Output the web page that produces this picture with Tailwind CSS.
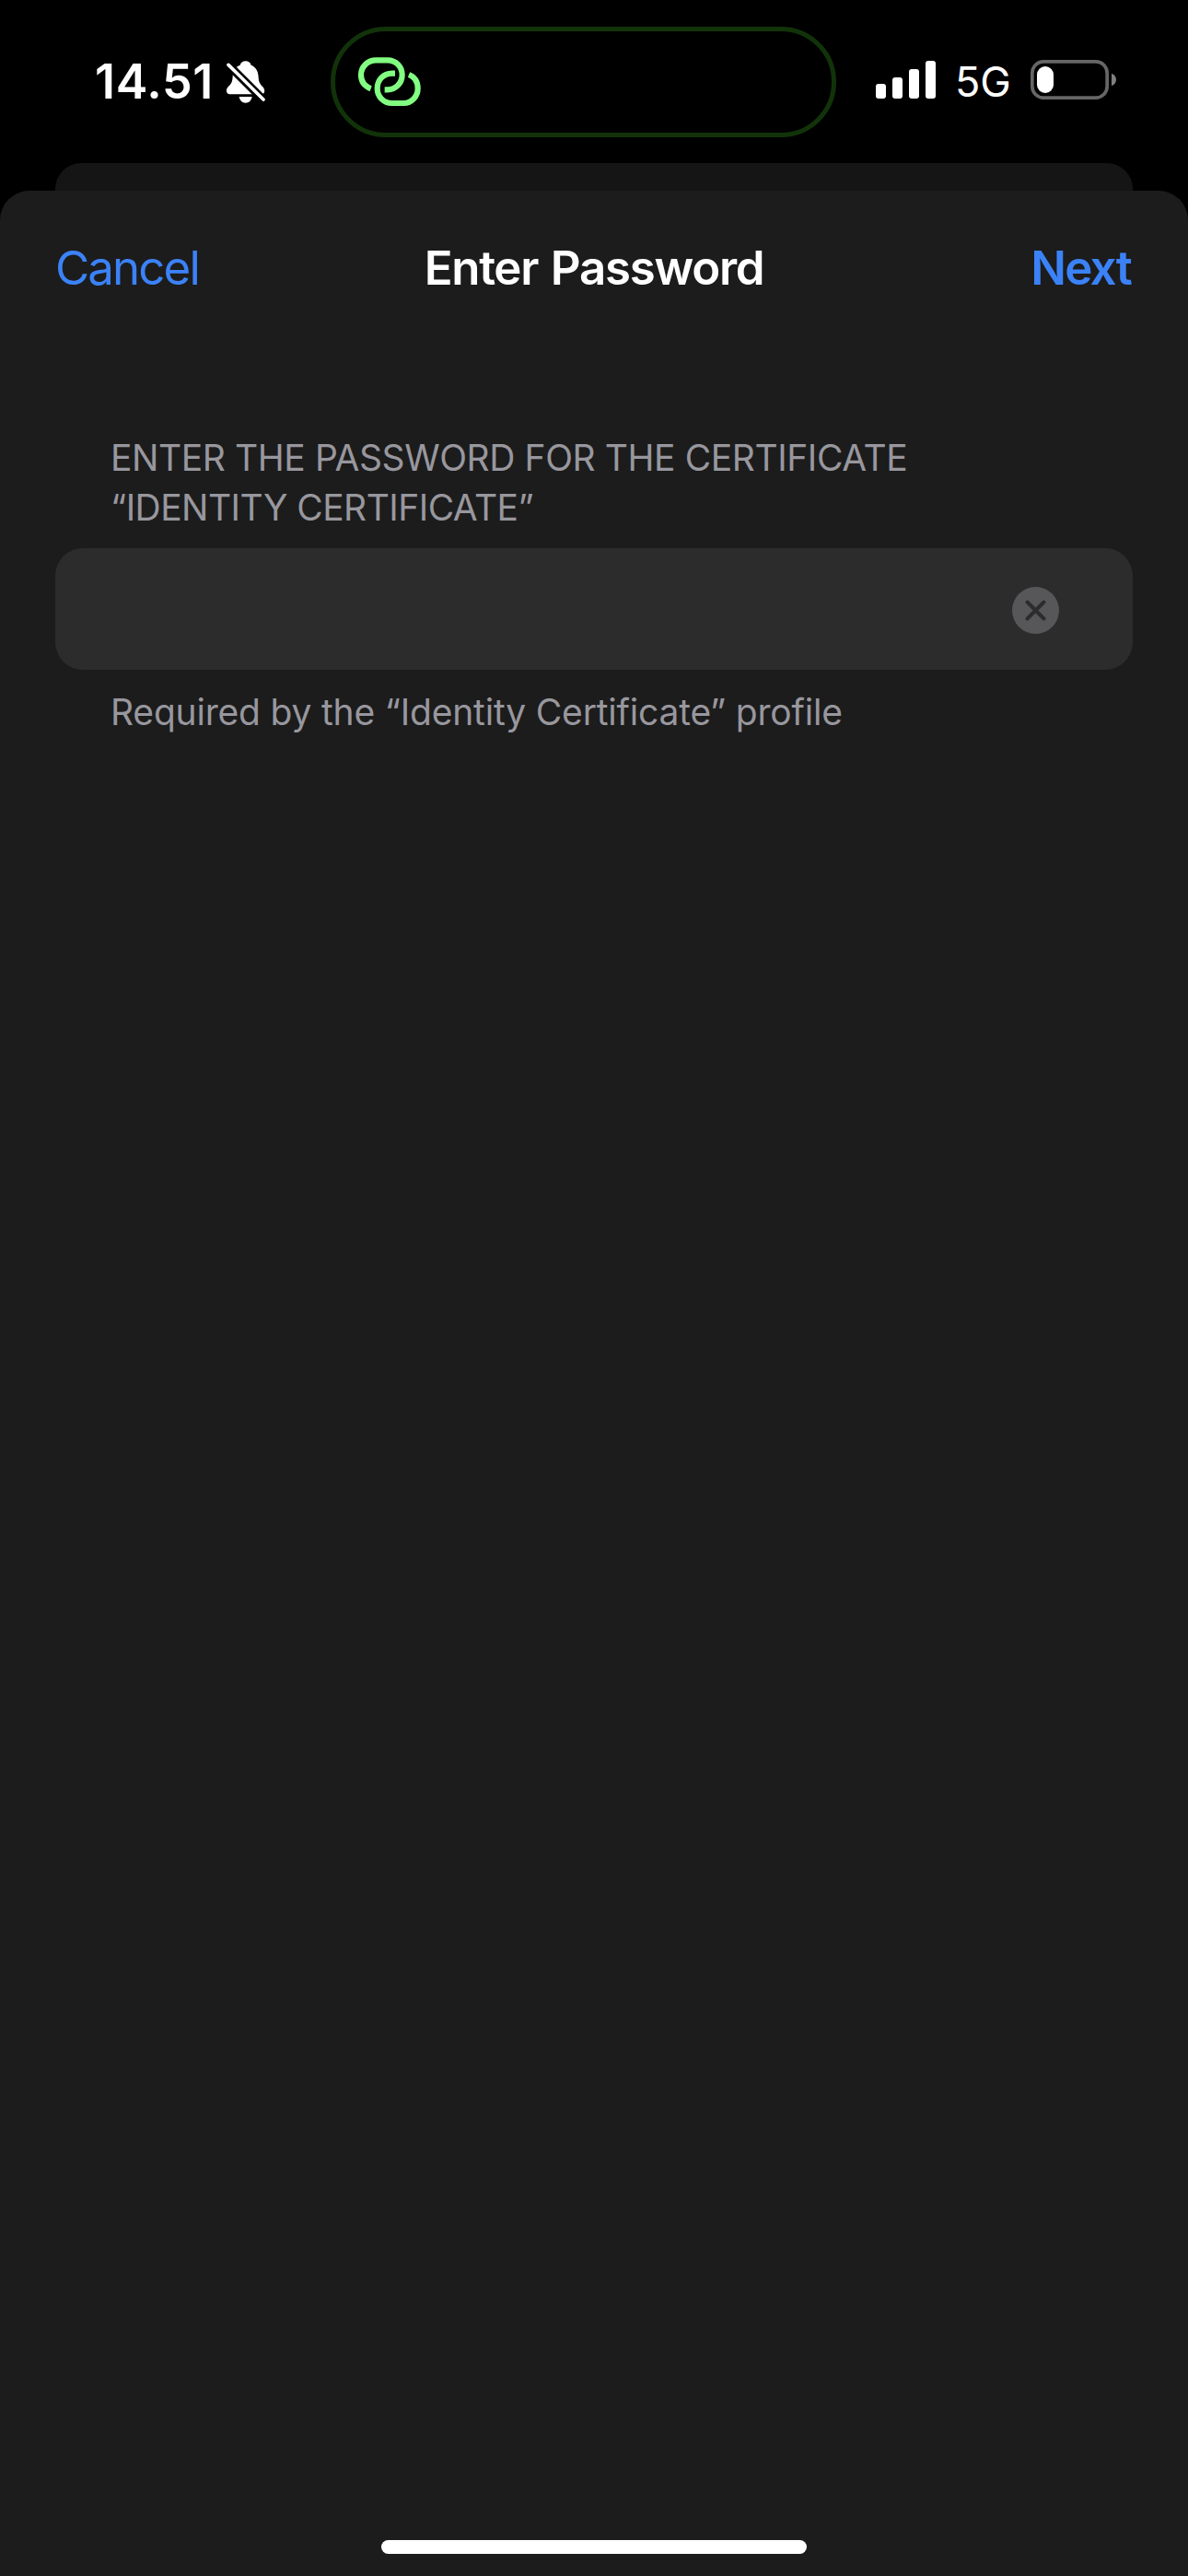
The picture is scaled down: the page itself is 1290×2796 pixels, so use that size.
<!DOCTYPE html>
<html lang="en">
<head>
<meta charset="utf-8">
<title>Enter Password</title>
<script src="https://cdn.jsdelivr.net/npm/@tailwindcss/browser@4"></script>
</head>
<body class="bg-black font-['Inter',sans-serif] text-white">
<div class="flex h-[2796px] w-[1290px] flex-col overflow-hidden">

  <!-- Status bar -->
  <header class="flex h-[177px] shrink-0 items-center">
    <div class="flex h-full w-[359px] items-center pl-[103px]">
      <span class="w-[141px] whitespace-nowrap text-[52px] leading-[60px] font-semibold tracking-[0.66px]">14.51</span>
      <svg class="h-[50px] w-[45px] shrink-0" viewBox="27 24 135 150" fill="#fff">
        <mask id="slash" maskUnits="userSpaceOnUse" x="20" y="20" width="150" height="160">
          <rect x="20" y="20" width="150" height="160" fill="#fff"/>
          <path d="M20 24L175 179" stroke="#000" stroke-width="27"/>
        </mask>
        <g mask="url(#slash)">
          <path d="M95 31C86 31 79 36 77 44C61 50 54 62 53 80C52 98 50 103 38 115C29 125 32 139 44 139H146C158 139 160 125 151 115C140 103 138 98 137 84C136 62 128 50 113 44C111 36 104 31 95 31Z"/>
        </g>
        <path d="M74 147H116C114 160 105 167 95 167S76 160 74 147Z"/>
        <path d="M39 43L153 156" stroke="#fff" stroke-width="11" stroke-linecap="round"/>
      </svg>
    </div>
    <div class="flex h-[120px] w-[549px] items-center rounded-[60px] border-[5px] border-[#12330a] pl-[23px]">
      <svg class="h-[58px] w-[72px]" viewBox="141 120 216 174" fill="none" stroke="#82ff82" stroke-width="18.5">
        <path d="M188 229C168 221 156 205 156 184C156 157 178 136 205 136H243C269 136 290 157 290 184C290 211 269 232 243 232H233"/>
        <path d="M267 179H257C229 180 209 200 209 228C209 255 230 276 257 276H295C320 276 341 255 341 228C341 206 330 190 312 183"/>
      </svg>
    </div>
    <div class="flex h-full flex-1 items-center pl-[43px]">
      <svg class="mb-[4px] h-[41px] w-[65px]" viewBox="63 78 195 123" fill="#fff">
        <rect x="63" y="153" width="33" height="48" rx="9"/>
        <rect x="117" y="132" width="33" height="69" rx="9"/>
        <rect x="171" y="105" width="33" height="96" rx="9"/>
        <rect x="225" y="78" width="33" height="123" rx="9"/>
      </svg>
      <span class="ml-[21px] w-[82px] text-[45px] leading-[54px]">5G</span>
      <svg class="mb-[4px] h-[43px] w-[93px]" viewBox="567 75 279 129">
        <rect x="572.5" y="80.5" width="244" height="118" rx="37" fill="none" stroke="#666" stroke-width="11"/>
        <rect x="588" y="96" width="54" height="87" rx="27" fill="#fff"/>
        <path d="M831 119C841 123 846 131 846 139.500C846 148 841 156 831 160Z" fill="#808080"/>
      </svg>
    </div>
  </header>

  <!-- Edge of the sheet underneath -->
  <div class="mx-[60px] h-[30px] shrink-0 rounded-t-[28px] bg-[#151515]"></div>

  <!-- Active sheet -->
  <main class="flex flex-1 flex-col rounded-t-[32px] bg-[#1c1c1c]">
    <nav class="grid h-[167px] grid-cols-[1fr_auto_1fr] items-center px-[60px] text-[51px] leading-[60px]">
      <button class="justify-self-start tracking-[-1.9px] text-[#3b82f7]">Cancel</button>
      <h1 class="font-semibold tracking-[-1.28px] [word-spacing:2px]">Enter Password</h1>
      <button class="mr-[2px] justify-self-end font-semibold tracking-[-1.7px] text-[#3b82f7]">Next</button>
    </nav>

    <section class="mt-[96px] flex flex-col px-[60px] text-[39px] leading-[54px] text-[#98979e]">
      <label for="pw" class="pl-[60px] tracking-[-0.42px]">ENTER THE PASSWORD FOR THE CERTIFICATE<br><span class="tracking-[-0.54px]">“IDENTITY CERTIFICATE”</span></label>
      <div class="mt-[17px] flex h-[132px] items-center justify-end rounded-[30px] bg-[#2c2c2c] pr-[80px] pl-[60px]">
        <input id="pw" type="password" class="min-w-0 flex-1 bg-transparent outline-none">
        <svg class="mt-[3px] h-[51px] w-[51px]" viewBox="0 0 51 51">
          <circle cx="25.500" cy="25.500" r="25.500" fill="#575759"/>
          <path d="M16.500 16.500L34.500 34.500M34.500 16.500L16.500 34.500" stroke="#2c2c2c" stroke-width="4" stroke-linecap="round"/>
        </svg>
      </div>
      <p class="mt-[19px] pl-[60px] tracking-[-0.19px]">Required by the “Identity Certificate” profile</p>
    </section>

    <div class="mt-auto mb-[24px] h-[15px] w-[462px] self-center rounded-full bg-white"></div>
  </main>
</div>
</body>
</html>
